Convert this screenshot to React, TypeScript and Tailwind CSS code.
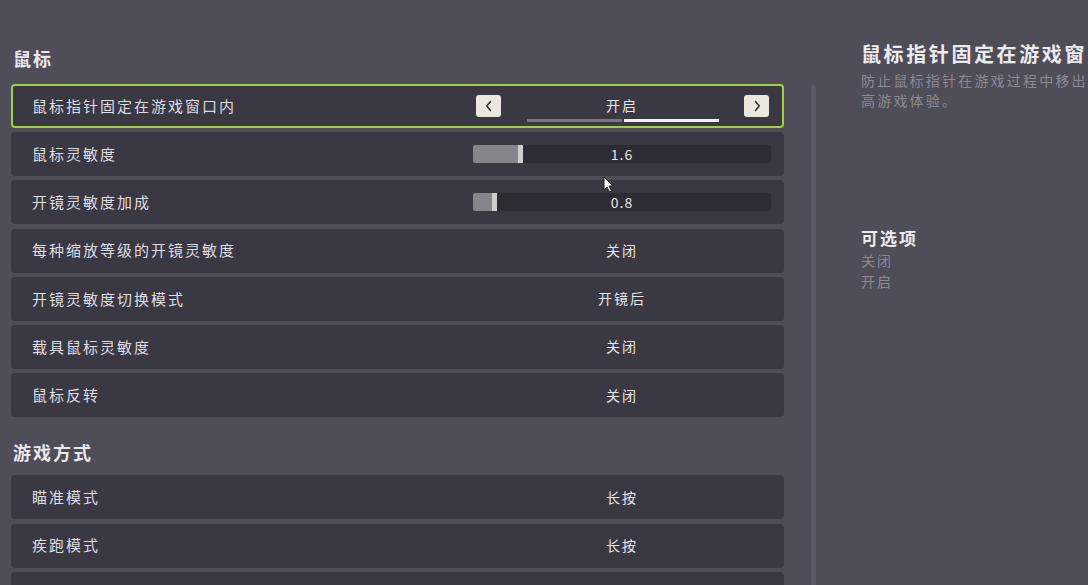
import React from "react";

const font = { fontFamily: '"Noto Sans CJK SC", "Noto Sans", sans-serif' };

function Chevron({ dir }: { dir: "l" | "r" }) {
  return (
    <svg width="10" height="12" viewBox="0 0 10 12" fill="none">
      {dir === "l" ? (
        <path d="M6.5 1.5 L2.8 6 L6.5 10.5" stroke="#2f2e33" strokeWidth="1.5" strokeLinecap="round" strokeLinejoin="round" />
      ) : (
        <path d="M3.5 1.5 L7.2 6 L3.5 10.5" stroke="#2f2e33" strokeWidth="1.5" strokeLinecap="round" strokeLinejoin="round" />
      )}
    </svg>
  );
}

type Row =
  | { label: string; kind: "toggle"; value: string; active?: boolean }
  | { label: string; kind: "slider"; value: string; fill: number }
  | { label: string; kind: "text"; value: string }
  | { label: string; kind: "empty"; value: string };

function RowItem({ row }: { row: Row }) {
  const active = row.kind === "toggle" && row.active;
  return (
    <div
      className={
        "h-[44px] rounded-[4px] bg-[#3a3842] flex items-center justify-between shrink-0 " +
        (active ? "border-2 border-[#a3cd45] pl-[19px] pr-[11px]" : "pl-[21px] pr-[13px]")
      }
    >
      <span className="text-[15px] tracking-[2px] text-[#dedde2]">{row.label}</span>
      <div className="w-[298px] h-full relative flex items-center justify-center">
        {row.kind === "toggle" && (
          <>
            <div className="absolute left-[3px] top-1/2 -translate-y-1/2 w-[25px] h-[22px] rounded-[3px] bg-[#ebe7df] flex items-center justify-center">
              <Chevron dir="l" />
            </div>
            <span className="text-[14px] tracking-[2px] text-[#e6e5ea] -mt-[1px]">{row.value}</span>
            <div className="absolute right-[2px] top-1/2 -translate-y-1/2 w-[25px] h-[22px] rounded-[3px] bg-[#ebe7df] flex items-center justify-center">
              <Chevron dir="r" />
            </div>
            <div className="absolute left-[54px] bottom-[4px] flex gap-[2px] h-[3px]">
              <div className="w-[95px] h-full bg-[#77767e]"></div>
              <div className="w-[95px] h-full bg-[#f2f1ef]"></div>
            </div>
          </>
        )}
        {row.kind === "slider" && (
          <div className="w-full h-[18px] rounded-[2px] bg-[#2d2b33] relative flex items-center justify-center">
            <div
              className="absolute left-0 top-0 bottom-0 rounded-l-[2px] bg-[#86858b] flex justify-end"
              style={{ width: row.fill }}
            >
              <div className="w-[5px] h-full bg-[#cfcfd2]"></div>
            </div>
            <span className="relative text-[14px] tracking-[1px] text-[#e6e5ea]">{row.value}</span>
          </div>
        )}
        {row.kind === "text" && (
          <span className="text-[14px] tracking-[2px] text-[#e6e5ea]">{row.value}</span>
        )}
      </div>
    </div>
  );
}

export default function App() {
  const mouse: Row[] = [
    { label: "鼠标指针固定在游戏窗口内", kind: "toggle", value: "开启", active: true },
    { label: "鼠标灵敏度", kind: "slider", value: "1.6", fill: 50 },
    { label: "开镜灵敏度加成", kind: "slider", value: "0.8", fill: 24 },
    { label: "每种缩放等级的开镜灵敏度", kind: "text", value: "关闭" },
    { label: "开镜灵敏度切换模式", kind: "text", value: "开镜后" },
    { label: "载具鼠标灵敏度", kind: "text", value: "关闭" },
    { label: "鼠标反转", kind: "text", value: "关闭" },
  ];
  const game: Row[] = [
    { label: "瞄准模式", kind: "text", value: "长按" },
    { label: "疾跑模式", kind: "text", value: "长按" },
    { label: "", kind: "empty", value: "" },
  ];
  return (
    <div className="w-[1088px] h-[585px] overflow-hidden bg-[#4f4d58] flex relative" style={font}>
      <div className="w-[796px] shrink-0 pl-[11px] pr-[12px] flex flex-col">
        <div className="pt-[44px] pb-[12px] pl-[2px]">
          <div className="text-[18px] leading-[28px] font-bold tracking-[2px] text-[#e8e7ec]">鼠标</div>
        </div>
        <div className="flex flex-col gap-[4.2px]">
          {mouse.map((r, i) => (
            <RowItem key={i} row={r} />
          ))}
        </div>
        <div className="pt-[21px] pb-[9px] pl-[2px]">
          <div className="text-[18px] leading-[28px] font-bold tracking-[2px] text-[#e8e7ec]">游戏方式</div>
        </div>
        <div className="flex flex-col gap-[4.5px]">
          {game.map((r, i) => (
            <RowItem key={i} row={r} />
          ))}
        </div>
      </div>
      <div className="w-[5px] shrink-0 ml-[15px] mt-[85px] rounded-t-[3px] bg-[#5c5a66]"></div>
      <div className="w-[330px] shrink-0 ml-[45px] pt-[40px]">
        <div className="text-[20px] leading-[28px] font-bold tracking-[2.6px] text-[#ebeaee] whitespace-nowrap">
          鼠标指针固定在游戏窗
        </div>
        <div className="mt-[2px] text-[14px] leading-[20px] tracking-[2.2px] text-[#8c8a94] w-[226px] overflow-hidden">
          <div className="whitespace-nowrap">防止鼠标指针在游戏过程中移出</div>
          <div className="whitespace-nowrap">高游戏体验。</div>
        </div>
        <div className="mt-[116px] text-[17px] leading-[24px] font-bold tracking-[2px] text-[#ebeaee]">可选项</div>
        <div className="text-[14px] leading-[21px] tracking-[2px] text-[#8c8a94]">关闭</div>
        <div className="text-[14px] leading-[21px] tracking-[2px] text-[#8c8a94]">开启</div>
      </div>
      <svg className="absolute left-[603px] top-[176px]" width="12" height="17" viewBox="0 0 12 17">
        <path d="M1 1 L1 14 L4 11 L6.5 16 L8.5 15 L6 10 L10 10 Z" fill="#ffffff" stroke="#222" strokeWidth="1" strokeLinejoin="round" />
      </svg>
    </div>
  );
}
